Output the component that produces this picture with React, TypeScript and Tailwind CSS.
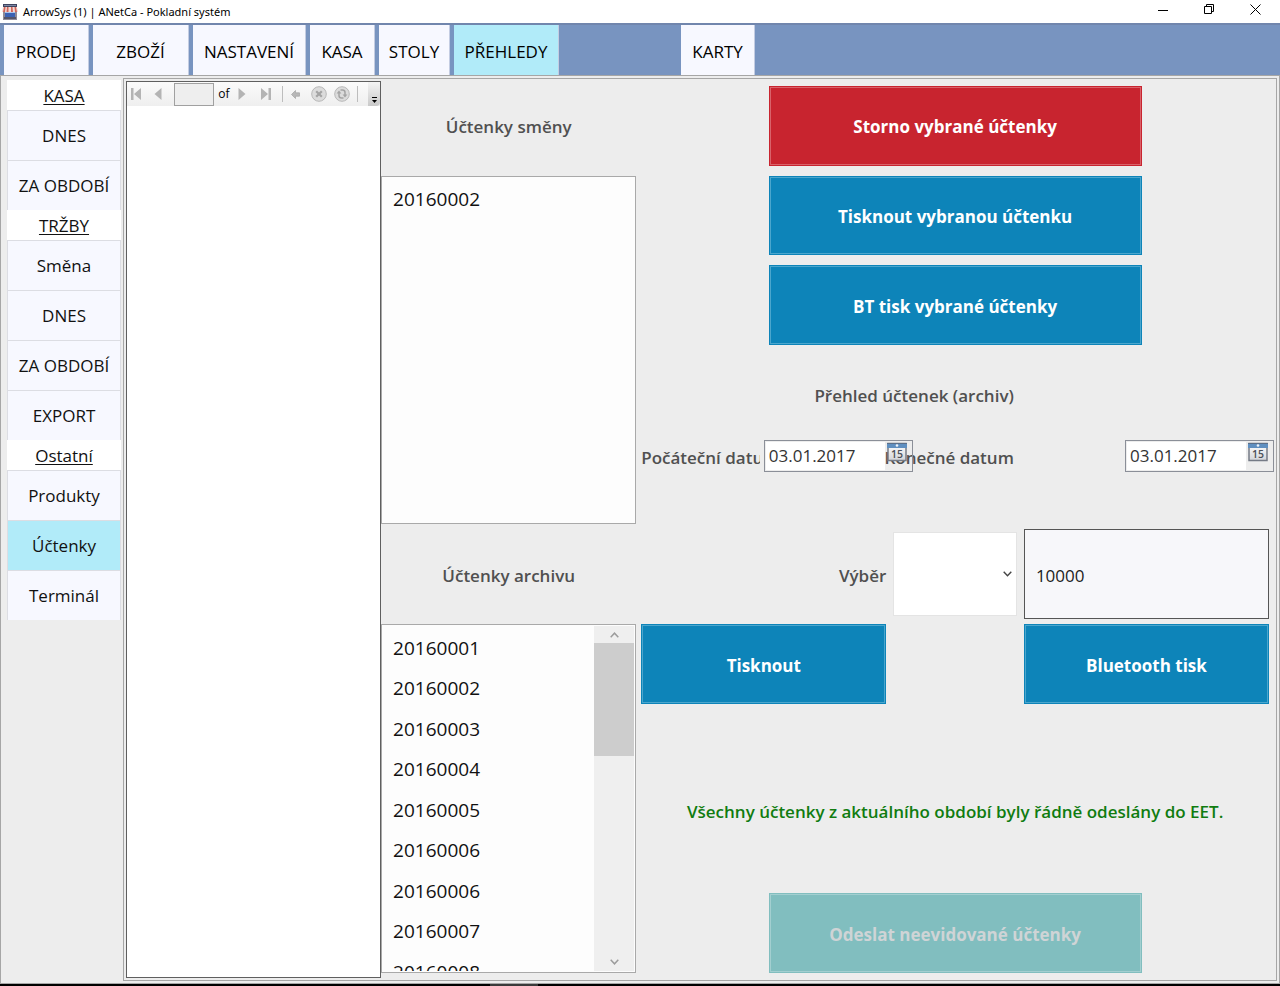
import React from "react";
import { clsx } from "clsx";

const tabs = [
  { label: "PRODEJ", width: "w-[85px]" },
  { label: "ZBOŽÍ", width: "w-24" },
  { label: "NASTAVENÍ", width: "w-[113px]" },
  { label: "KASA", width: "w-[65px]" },
  { label: "STOLY", width: "w-[71px]" },
  { label: "PŘEHLEDY", width: "w-[105px]", active: true },
];

const sections = [
  { title: "KASA", items: ["DNES", "ZA OBDOBÍ"] },
  { title: "TRŽBY", items: ["Směna", "DNES", "ZA OBDOBÍ", "EXPORT"] },
  { title: "Ostatní", items: ["Produkty", "Účtenky", "Terminál"] },
];

const archive = [
  "20160001",
  "20160002",
  "20160003",
  "20160004",
  "20160005",
  "20160006",
  "20160006",
  "20160007",
  "20160008",
];

function ShopIcon() {
  return (
    <svg width="16" height="16" viewBox="0 0 16 16" aria-hidden="true">
      <rect x="1" y="0" width="14" height="4" fill="#3d4560" />
      <rect x="2" y="1" width="12" height="1" fill="#7c86a3" />
      <rect x="1" y="6" width="14" height="10" fill="#8f8b98" />
      <rect x="3" y="9" width="10" height="4" fill="#3b62b4" />
      <rect x="3" y="8" width="10" height="1" fill="#a9c4ee" />
      <rect x="2" y="13" width="12" height="2" fill="#55566b" />
      <path d="M1 3h14l1 5H0z" fill="#f3d9d2" />
      <path d="M2 3h1.500l-.5 5H1zM5 3h1.500v5H4.500zM9 3h1.500l.5 5H9zM12.500 3H14l1 5h-2z" fill="#d0655c" />
    </svg>
  );
}

function TitleBar() {
  return (
    <header className="flex h-[23px] items-center bg-white pr-[2px] pl-[2px]">
      <ShopIcon />
      <h1 className="ml-[5px] font-['Noto_Sans',sans-serif] text-[11px] leading-4 text-black">
        ArrowSys (1) | ANetCa - Pokladní systém
      </h1>
      <div className="ml-auto flex h-full">
        <button type="button" aria-label="Minimalizovat" className="flex w-[46px] items-center justify-center">
          <svg width="11" height="11" viewBox="0 0 11 11" className="mb-1">
            <path d="M0 6.500h10" stroke="#000" fill="none" />
          </svg>
        </button>
        <button type="button" aria-label="Obnovit" className="flex w-[46px] items-center justify-center">
          <svg width="11" height="11" viewBox="0 0 11 11" className="mb-1">
            <path d="M.5 2.500h7v7h-7zM2.500 2.500v-2h7v7h-2" stroke="#000" fill="none" />
          </svg>
        </button>
        <button type="button" aria-label="Zavřít" className="flex w-[46px] items-center justify-center">
          <svg width="11" height="11" viewBox="0 0 11 11" className="mb-1">
            <path d="M.5.500l10 10M10.500.500l-10 10" stroke="#000" fill="none" />
          </svg>
        </button>
      </div>
    </header>
  );
}

function Tab({ label, width, active }: { label: string; width: string; active?: boolean }) {
  return (
    <button
      type="button"
      className={clsx(
        "h-[50px] border-r border-[#c3cce2] pt-[3px] text-[17px] leading-6 text-black",
        width,
        active ? "bg-[#b1ebf9]" : "bg-[#f7f8ff]",
      )}
    >
      {label}
    </button>
  );
}

function MainNav() {
  return (
    <nav className="flex gap-1 border-t-2 border-[#7186ad] bg-[#7894c0] pl-1">
      {tabs.map((t) => (
        <Tab key={t.label} {...t} />
      ))}
      <div className="ml-[118px]">
        <Tab label="KARTY" width="w-[74px]" />
      </div>
    </nav>
  );
}

function Sidebar() {
  return (
    <aside className="w-[114px] shrink-0 text-[17px] leading-6 text-[#111]">
      {sections.map((s) => (
        <section key={s.title}>
          <h2 className="flex h-[30px] items-center justify-center bg-white pt-[2px] underline underline-offset-2">
            {s.title}
          </h2>
          {s.items.map((item) => (
            <button
              key={item}
              type="button"
              className={clsx(
                "block h-[50px] w-full border-x border-t border-[#dcdde3] pt-px",
                item === "Účtenky" ? "bg-[#b1ebf9]" : "bg-[#f7f8ff]",
              )}
            >
              {item}
            </button>
          ))}
        </section>
      ))}
    </aside>
  );
}

function ToolIcon({ label, width, children }: { label: string; width: string; children: React.ReactNode }) {
  return (
    <button type="button" aria-label={label} disabled className={clsx("flex h-6 items-center justify-center", width)}>
      {children}
    </button>
  );
}

function ReportViewer() {
  return (
    <section aria-label="Náhled" className="row-span-full flex flex-col border border-[#5f5f5f] bg-white">
      <div className="flex h-6 items-center bg-linear-to-b from-[#fbfbfb] to-[#efefef] text-[12px] text-black">
        <ToolIcon label="První strana" width="w-[18px]">
          <svg width="12" height="12" viewBox="0 0 12 12">
            <path d="M1 0h2.500v12H1zM11 0v12L4 6z" fill="#b4b4b4" />
          </svg>
        </ToolIcon>
        <ToolIcon label="Předchozí strana" width="w-[26px]">
          <svg width="8" height="12" viewBox="0 0 8 12">
            <path d="M7.500 0v12L.5 6z" fill="#b4b4b4" />
          </svg>
        </ToolIcon>
        <input
          aria-label="Strana"
          className="ml-[3px] h-[23px] w-10 border border-[#a0a0a0] bg-[#eeeeee] px-1"
        />
        <span className="w-5 text-center">of</span>
        <ToolIcon label="Další strana" width="w-4">
          <svg width="8" height="12" viewBox="0 0 8 12">
            <path d="M.5 0v12l7-6z" fill="#b4b4b4" />
          </svg>
        </ToolIcon>
        <ToolIcon label="Poslední strana" width="w-8">
          <svg width="12" height="12" viewBox="0 0 12 12">
            <path d="M8.500 0H11v12H8.500zM1 0v12l7-6z" fill="#b4b4b4" />
          </svg>
        </ToolIcon>
        <span className="h-4 w-px bg-[#bdbdbd]" />
        <ToolIcon label="Zpět" width="w-6">
          <svg width="9" height="9" viewBox="0 0 9 9">
            <path d="M4.500.500v2.300h4v3.400h-4v2.300L.5 4.500z" fill="#b8b8b8" stroke="#a3a3a3" strokeWidth=".7" />
          </svg>
        </ToolIcon>
        <ToolIcon label="Zastavit" width="w-[23px]">
          <svg width="16" height="16" viewBox="0 0 16 16">
            <circle cx="8" cy="8" r="7.300" fill="#dcdcdc" stroke="#b8b8b8" />
            <path d="M5.200 5.200l5.600 5.600M10.800 5.200l-5.600 5.600" stroke="#a4a4a4" strokeWidth="2.200" />
          </svg>
        </ToolIcon>
        <ToolIcon label="Obnovit sestavu" width="w-[23px]">
          <svg width="16" height="16" viewBox="0 0 16 16">
            <circle cx="8" cy="8" r="7.300" fill="#dcdcdc" stroke="#b8b8b8" />
            <path d="M9.500 12H7.500Q5 12 5 9.500V7M6.500 4h2Q11 4 11 6.500V9" stroke="#a4a4a4" strokeWidth="1.500" fill="none" />
            <path d="M2.600 7.500h4.800L5 4.600zM8.600 8.500h4.800L11 11.400z" fill="#a4a4a4" />
          </svg>
        </ToolIcon>
        <span className="ml-1 h-4 w-px bg-[#bdbdbd]" />
        <button
          type="button"
          aria-label="Další možnosti"
          className="ml-auto flex h-full w-3 items-end justify-center rounded-br bg-linear-to-b from-[#f4f4f4] to-[#c9c9c9]"
        >
          <svg width="7" height="9" viewBox="0 0 7 9">
            <path d="M1 .5h5" stroke="#000" />
            <path d="M1 3h5L3.500 6z" fill="#000" />
          </svg>
        </button>
      </div>
    </section>
  );
}

const tones = {
  red: "bg-[#c8242f] text-white outline-[#d9626a]",
  blue: "bg-[#0d84b9] text-white outline-[#4ba6cd]",
  teal: "bg-[#81bebf] text-[#cfd4d6] outline-[#a3cfd0]",
};

function ActionButton({
  children,
  tone = "blue",
  className,
  disabled,
}: {
  children: React.ReactNode;
  tone?: keyof typeof tones;
  className?: string;
  disabled?: boolean;
}) {
  return (
    <button
      type="button"
      disabled={disabled}
      className={clsx("pt-[3px] text-[17px] leading-6 font-bold outline-1 -outline-offset-2", tones[tone], className)}
    >
      {children}
    </button>
  );
}

function DateField({ id }: { id: string }) {
  return (
    <div className="relative z-10 flex h-8 w-[149px] shrink-0 border border-[#8b8f98] p-px">
      <input
        id={id}
        defaultValue="03.01.2017"
        className="w-[119px] bg-white pl-[3px] text-[17px] leading-6 text-[#333]"
      />
      <button type="button" aria-label="Otevřít kalendář" className="flex w-6 justify-center">
        <svg width="20" height="20" viewBox="0 0 20 20">
          <defs>
            <linearGradient id={`${id}-page`} x1="0" y1="0" x2="0" y2="1">
              <stop offset="0" stopColor="#ffffff" />
              <stop offset="1" stopColor="#d3d5d9" />
            </linearGradient>
          </defs>
          <rect x="1" y="1.500" width="18" height="17" fill={`url(#${id}-page)`} stroke="#757b86" strokeWidth="1.500" />
          <rect x="0" y="1" width="20" height="5" fill="#5f8fc0" />
          <rect x="0" y="1" width="20" height="1" fill="#5b6f8a" />
          <circle cx="10" cy="3.500" r="1.300" fill="#eef4fa" />
          <text x="10" y="15.500" textAnchor="middle" fontSize="10.500" fontWeight="600" fill="#4b5058">
            15
          </text>
        </svg>
      </button>
    </div>
  );
}

function ReceiptList({ label, items, scrollable, className }: { label: string; items: string[]; scrollable?: boolean; className: string }) {
  return (
    <div className={clsx("my-[5px] flex overflow-hidden border border-[#a9a9a9] bg-[#fdfdfd] p-px contain-size", className)}>
      <ul aria-label={label} className="min-w-0 flex-1 overflow-hidden pt-[2px] pl-[10px] text-[19px] text-[#111]">
        {items.map((n, i) => (
          <li key={i} className="flex h-10 items-center even:h-[41px]">
            {n}
          </li>
        ))}
      </ul>
      {scrollable && (
        <div className="flex w-10 flex-col bg-[#efefef]">
          <button type="button" aria-label="Nahoru" className="flex h-[17px] items-center justify-center">
            <svg width="9" height="6" viewBox="0 0 9 6">
              <path d="M.7 5.200l3.800-4 3.800 4" fill="none" stroke="#9c9c9c" strokeWidth="1.500" />
            </svg>
          </button>
          <div className="h-[113px] bg-[#cdcdcd]" />
          <button type="button" aria-label="Dolů" className="mt-auto flex h-[17px] items-center justify-center">
            <svg width="9" height="6" viewBox="0 0 9 6">
              <path d="M.7.800l3.800 4 3.800-4" fill="none" stroke="#9c9c9c" strokeWidth="1.500" />
            </svg>
          </button>
        </div>
      )}
    </div>
  );
}

const heading = "text-[17px] leading-6 font-semibold text-[#505050]";

export default function App() {
  return (
    <div className="flex min-h-screen flex-col bg-[#ededed] font-['Open_Sans','Noto_Sans',sans-serif]">
      <TitleBar />
      <MainNav />
      <div className="flex flex-1 border border-[#a6a6a6] pt-[2px] pr-[2px] pb-[2px] pl-[6px]">
        <div className="pt-[2px]">
          <Sidebar />
        </div>
        <main className="ml-[2px] grid flex-1 grid-cols-[2fr_2fr_2fr_1fr_2fr] grid-rows-[repeat(10,minmax(84px,1fr))] border border-[#a6a6a6] p-[2px]">
          <ReportViewer />

          <h2 className={clsx("col-start-2 row-start-1 self-center pt-[3px] text-center", heading)}>Účtenky směny</h2>
          <ReceiptList label="Účtenky směny" items={["20160002"]} className="col-start-2 row-span-4 row-start-2" />
          <h2 className={clsx("col-start-2 row-start-6 self-center pt-[3px] text-center", heading)}>Účtenky archivu</h2>
          <ReceiptList label="Účtenky archivu" items={archive} scrollable className="col-start-2 row-span-4 row-start-7" />

          <ActionButton tone="red" className="col-span-3 col-start-3 row-start-1 my-[5px] w-[373px] justify-self-center">
            Storno vybrané účtenky
          </ActionButton>
          <ActionButton className="col-span-3 col-start-3 row-start-2 my-[5px] w-[373px] justify-self-center">
            Tisknout vybranou účtenku
          </ActionButton>
          <ActionButton className="col-span-3 col-start-3 row-start-3 my-[5px] w-[373px] justify-self-center">
            BT tisk vybrané účtenky
          </ActionButton>

          <h2 className={clsx("col-span-2 col-start-3 row-start-4 self-center justify-self-end pt-[3px] pr-[5px] whitespace-nowrap", heading)}>
            Přehled účtenek (archiv)
          </h2>

          <div className="col-start-3 row-start-5 flex min-w-0">
            <label htmlFor="date-from" className={clsx("mr-1 ml-[5px] min-w-0 flex-1 overflow-hidden pt-[6px] whitespace-nowrap", heading)}>
              Počáteční datum
            </label>
            <div className="w-1/2">
              <DateField id="date-from" />
            </div>
          </div>
          <div className="col-start-4 row-start-5 flex min-w-0 justify-end pr-[5px]">
            <label htmlFor="date-to" className={clsx("pt-[6px] whitespace-nowrap", heading)}>
              Konečné datum
            </label>
          </div>
          <div className="col-start-5 row-start-5 flex justify-end">
            <DateField id="date-to" />
          </div>

          <label htmlFor="range" className={clsx("col-start-3 row-start-6 self-center justify-self-end pt-[3px] pr-[5px]", heading)}>
            Výběr
          </label>
          <div className="relative col-start-4 row-start-6 mx-[2px] my-[3px]">
            <select id="range" className="h-full w-full appearance-none border border-[#e4e4e4] bg-white pl-3 text-[17px]">
              <option value="" />
            </select>
            <svg width="9" height="6" viewBox="0 0 9 6" className="pointer-events-none absolute top-1/2 right-[5px] -translate-y-1/2">
              <path d="M.7.800l3.800 4 3.800-4" fill="none" stroke="#444" strokeWidth="1.400" />
            </svg>
          </div>
          <input
            aria-label="Počet"
            defaultValue="10000"
            className="col-start-5 row-start-6 mx-[5px] min-w-0 border border-[#555] bg-[#f7f7fa] px-[11px] pt-[3px] text-[17px] leading-6 text-[#222]"
          />

          <ActionButton className="col-start-3 row-start-7 m-[5px]">Tisknout</ActionButton>
          <ActionButton className="col-start-5 row-start-7 m-[5px]">Bluetooth tisk</ActionButton>

          <p className="col-span-3 col-start-3 row-start-9 pt-px text-center text-[17px] leading-6 font-semibold text-[#107c10]">
            Všechny účtenky z aktuálního období byly řádně odeslány do EET.
          </p>
          <ActionButton tone="teal" disabled className="col-span-3 col-start-3 row-start-10 my-[5px] w-[373px] justify-self-center">
            Odeslat neevidované účtenky
          </ActionButton>
        </main>
      </div>
      <footer className="flex h-[2px] bg-black">
        <div className="ml-[490px] w-12 bg-[#3a3a3a]" />
      </footer>
    </div>
  );
}
